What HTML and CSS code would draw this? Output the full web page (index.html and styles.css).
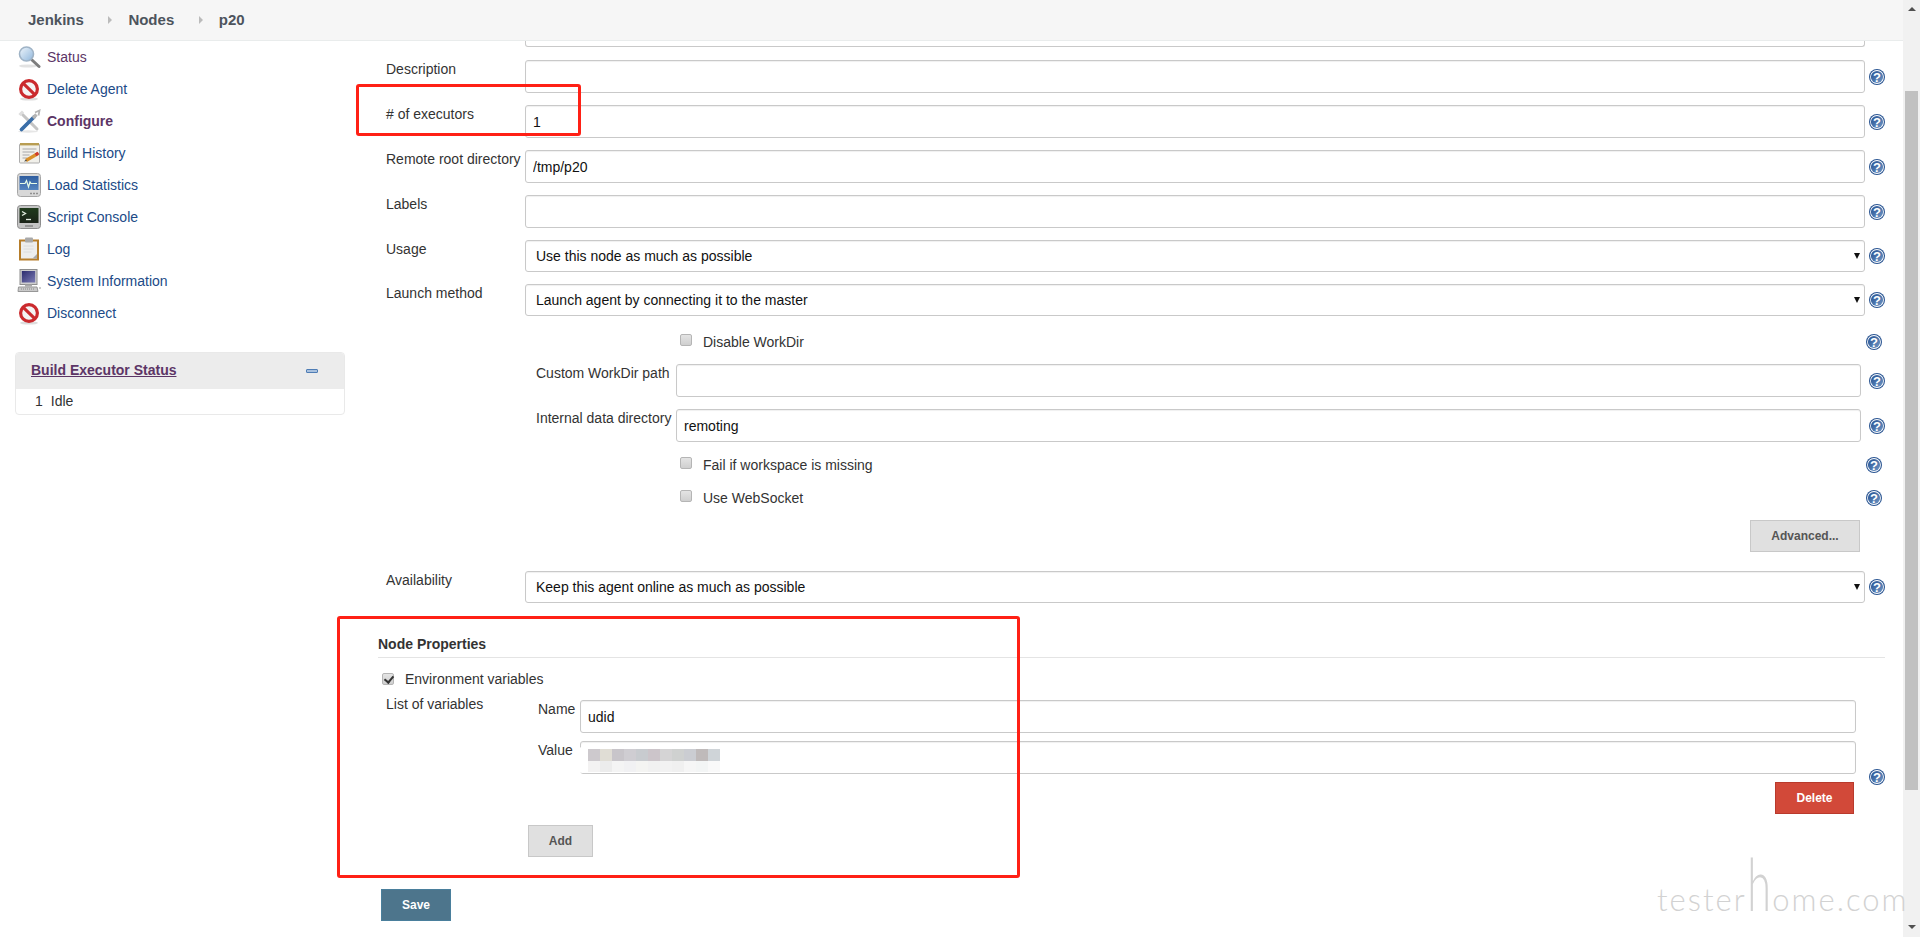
FILE: index.html
```html
<!DOCTYPE html>
<html lang="en">
<head>
<meta charset="utf-8">
<title>p20 Config [Jenkins]</title>
<link rel="stylesheet" href="styles.css">
</head>
<body>
<svg class="defs" width="0" height="0" aria-hidden="true">
  <defs>
    <linearGradient id="helpFill" x1="0" y1="0" x2="1" y2="1"><stop offset="0" stop-color="#234f90"/><stop offset="1" stop-color="#7198c6"/></linearGradient>
    <linearGradient id="glass" x1="0" y1="0" x2="1" y2="1"><stop offset="0" stop-color="#eef5fb"/><stop offset="1" stop-color="#8fb6dc"/></linearGradient>
    <linearGradient id="screen" x1="0" y1="0" x2="0" y2="1"><stop offset="0" stop-color="#2f5d9f"/><stop offset="1" stop-color="#5585bf"/></linearGradient>
    <linearGradient id="term" x1="0" y1="0" x2="0" y2="1"><stop offset="0" stop-color="#1f3a1c"/><stop offset="1" stop-color="#1b2318"/></linearGradient>
    <linearGradient id="desk" x1="0" y1="0" x2="1" y2="1"><stop offset="0" stop-color="#2c2c6e"/><stop offset="1" stop-color="#7c7cb4"/></linearGradient>
    <symbol id="help" viewBox="0 0 16 16">
      <circle cx="8" cy="8" r="8" fill="#2a5592"/>
      <circle cx="8" cy="8" r="6.9" fill="#fff"/>
      <circle cx="8" cy="8" r="6.1" fill="url(#helpFill)"/>
      <text x="8" y="12.6" text-anchor="middle" class="help-mark">?</text>
    </symbol>
    <symbol id="no" viewBox="0 0 24 24">
      <ellipse cx="12" cy="22" rx="9" ry="1.6" fill="#ddd"/>
      <circle cx="12" cy="12" r="8.4" fill="#f4f4f4" stroke="#cb2a2e" stroke-width="3.2"/>
      <path d="M6.2 6.4 L17.8 17.6" stroke="#cb2a2e" stroke-width="3.2"/>
    </symbol>
  </defs>
</svg>

<div class="page">
  <header class="topbar">
    <a class="crumb">Jenkins</a><span class="crumb-arrow"></span>
    <a class="crumb">Nodes</a><span class="crumb-arrow"></span>
    <a class="crumb">p20</a>
  </header>

  <div class="body-row">
    <aside class="sidebar">
      <nav class="tasks">
        <a class="task visited">
          <svg class="task-icon" viewBox="0 0 24 24"><ellipse cx="11" cy="21" rx="9" ry="1.6" fill="#e2e2e2"/><path d="M15 15 L22 21.5" stroke="#7d7d7d" stroke-width="3" stroke-linecap="round"/><circle cx="9.5" cy="9" r="7" fill="url(#glass)" stroke="#9fb3c6" stroke-width="1.6"/></svg>
          <span>Status</span>
        </a>
        <a class="task"><svg class="task-icon"><use href="#no"/></svg><span>Delete Agent</span></a>
        <a class="task current">
          <svg class="task-icon" viewBox="0 0 24 24"><ellipse cx="11" cy="22.500" rx="10" ry="1.200" fill="#e6e6e6"/><path d="M5.500 5.500 L20 20" stroke="#c4c4c4" stroke-width="3" stroke-linecap="round"/><path d="M2.500 6 L6 2.500" stroke="#dedede" stroke-width="3"/><path d="M17 8 L4.500 20.500" stroke="#3a6ea8" stroke-width="3.800" stroke-linecap="round"/><path d="M16 9 L19.500 5.500" stroke="#b5b5b5" stroke-width="3.400"/><path d="M18 3.500 L22.500 1.500 L21.500 6.500" fill="none" stroke="#b5b5b5" stroke-width="1.800"/></svg>
          <span>Configure</span>
        </a>
        <a class="task">
          <svg class="task-icon" viewBox="0 0 24 24"><rect x="2.500" y="3" width="20" height="19" rx="1" fill="#f1f0ea" stroke="#adadad"/><rect x="3" y="2" width="19" height="2.400" fill="#b89d52"/><path d="M5.500 8h14M5.500 11h12M5.500 14h7M5.500 17h5" stroke="#a8a8a8"/><path d="M9 19.500 L21 12.500" stroke="#d99028" stroke-width="3.200"/><path d="M18.500 13.800 L21.500 12" stroke="#cf3a2c" stroke-width="3.200"/><path d="M7 20.500 L9 18.500 L10 20z" fill="#444"/></svg>
          <span>Build History</span>
        </a>
        <a class="task">
          <svg class="task-icon" viewBox="0 0 24 24"><rect x="0.500" y="0.500" width="23" height="23" rx="3" fill="#d8d8d8" stroke="#a6a6a6"/><rect x="2.500" y="3" width="19" height="14" fill="url(#screen)"/><path d="M3 10.500h5l1.500-3 2 6.500 1.500-5 1 1.500h6" fill="none" stroke="#e6fbe6" stroke-width="1.200"/><path d="M13 20.500h8" stroke="#909090" stroke-width="1.400" stroke-dasharray="2 1"/></svg>
          <span>Load Statistics</span>
        </a>
        <a class="task">
          <svg class="task-icon" viewBox="0 0 24 24"><rect x="0.500" y="0.500" width="23" height="23" rx="3" fill="#c4c4c4" stroke="#8d8d8d"/><rect x="2.500" y="3" width="19" height="15" fill="url(#term)"/><path d="M5 6.500 L8.500 8.500 L5 10.500" fill="none" stroke="#e4eee0" stroke-width="1.300"/><path d="M9 14.500h5" stroke="#e4eee0" stroke-width="1.300"/><path d="M8 21h8" stroke="#777" stroke-width="1.200"/></svg>
          <span>Script Console</span>
        </a>
        <a class="task">
          <svg class="task-icon" viewBox="0 0 24 24"><rect x="2" y="2.500" width="20" height="21" fill="#b67d2a"/><rect x="4" y="4.500" width="16" height="17" fill="#ededed"/><path d="M15.500 21.500 L20 17 L20 21.500z" fill="#a8a8a8"/><rect x="8" y="0.500" width="8" height="5" rx="1" fill="#a9a9a9"/><path d="M6.500 9h10M6.500 12h10M6.500 15h8" stroke="#dcdcdc"/></svg>
          <span>Log</span>
        </a>
        <a class="task">
          <svg class="task-icon" viewBox="0 0 24 24"><rect x="3" y="0.500" width="17" height="15" fill="#cfcfcf" stroke="#8e8e8e"/><rect x="4.800" y="2" width="13.400" height="11.500" fill="url(#desk)"/><rect x="8" y="15.500" width="7" height="2" fill="#aaa"/><path d="M1.500 18h18.500l1 4.500H1z" fill="#c9c9c9" stroke="#979797"/><path d="M4 20h14" stroke="#8a8a8a" stroke-dasharray="1 1"/><circle cx="23" cy="19" r="1" fill="#bbb"/></svg>
          <span>System Information</span>
        </a>
        <a class="task"><svg class="task-icon"><use href="#no"/></svg><span>Disconnect</span></a>
      </nav>

      <section class="panel">
        <div class="panel-head">
          <a class="panel-title">Build Executor Status</a>
          <span class="collapse"></span>
        </div>
        <div class="panel-body"><span class="exec-num">1</span><span>Idle</span></div>
      </section>
    </aside>

    <main class="main">
      <div class="row"><span></span><input class="field partial" type="text"></div>

      <div class="row"><label class="lbl">Description</label><input class="field" type="text"><svg class="help"><use href="#help"/></svg></div>
      <div class="row"><label class="lbl"># of executors</label><input class="field" type="text" value="1"><svg class="help"><use href="#help"/></svg></div>
      <div class="row"><label class="lbl">Remote root directory</label><input class="field" type="text" value="/tmp/p20"><svg class="help"><use href="#help"/></svg></div>
      <div class="row"><label class="lbl">Labels</label><input class="field" type="text"><svg class="help"><use href="#help"/></svg></div>
      <div class="row"><label class="lbl">Usage</label><div class="select-wrap"><select class="field select"><option>Use this node as much as possible</option></select></div><svg class="help"><use href="#help"/></svg></div>
      <div class="row"><label class="lbl">Launch method</label><div class="select-wrap"><select class="field select"><option>Launch agent by connecting it to the master</option></select></div><svg class="help"><use href="#help"/></svg></div>

      <div class="sub">
        <div class="check-row"><input class="check" type="checkbox"><label>Disable WorkDir</label><svg class="help"><use href="#help"/></svg></div>
        <div class="sub-row"><label class="lbl">Custom WorkDir path</label><input class="field" type="text"><svg class="help"><use href="#help"/></svg></div>
        <div class="sub-row"><label class="lbl">Internal data directory</label><input class="field" type="text" value="remoting"><svg class="help"><use href="#help"/></svg></div>
        <div class="check-row"><input class="check" type="checkbox"><label>Fail if workspace is missing</label><svg class="help"><use href="#help"/></svg></div>
        <div class="check-row"><input class="check" type="checkbox"><label>Use WebSocket</label><svg class="help"><use href="#help"/></svg></div>
      </div>

      <div class="advanced-row"><button class="btn adv" type="button">Advanced...</button></div>

      <div class="row"><label class="lbl">Availability</label><div class="select-wrap"><select class="field select"><option>Keep this agent online as much as possible</option></select></div><svg class="help"><use href="#help"/></svg></div>

      <h2 class="section-title">Node Properties</h2>
      <div class="env-row"><input class="check" type="checkbox" checked><label>Environment variables</label></div>

      <div class="vars">
        <label class="lbl list-label">List of variables</label>
        <label class="lbl offset">Name</label>
        <input class="field offset" type="text" value="udid">
        <span></span>

        <span></span>
        <label class="lbl">Value</label>
        <div class="masked">
          <input class="field" type="text">
          <div class="blob"></div>
          <div class="pixels"><i></i><i></i><i></i><i></i><i></i><i></i><i></i><i></i><i></i><i></i><i></i><i></i><i></i><i></i><i></i><i></i><i></i><i></i><i></i><i></i><i></i><i></i></div>
        </div>
        <svg class="help help-vars"><use href="#help"/></svg>

        <span></span><span></span>
        <button class="btn danger" type="button">Delete</button>
      </div>

      <div class="add-row"><button class="btn add" type="button">Add</button></div>
      <div class="save-row"><button class="btn save" type="button">Save</button></div>
    </main>
  </div>
</div>

<div class="scrollbar">
  <span class="sb-up"></span>
  <div class="sb-thumb"></div>
  <span class="sb-down"></span>
</div>

<div class="red-box box-exec"></div>
<div class="red-box box-node"></div>
<div class="watermark">tester<span class="wm-big">h</span>ome.com</div>
</body>
</html>
```
FILE: styles.css
```css
* { box-sizing: border-box; }

html, body { margin: 0; height: 100%; }

body {
  display: flex;
  height: 937px;
  overflow: hidden;
  background: #fff;
  color: #333;
  font: 14px/18px "Liberation Sans", Arial, sans-serif;
}

.defs { position: absolute; }

.help-mark {
  fill: #fff;
  font: bold 13px "Liberation Sans", Arial, sans-serif;
}

.page {
  flex: 1;
  min-width: 0;
  display: flex;
  flex-direction: column;
}

/* top breadcrumb bar */
.topbar {
  height: 41px;
  flex: none;
  display: flex;
  align-items: center;
  padding: 0 0 1px 28px;
  background: #f6f6f6;
  border-bottom: 1px solid #e9ecec;
}

.crumb {
  color: #4d545d;
  font-size: 15px;
  font-weight: bold;
}

.crumb-arrow {
  width: 0;
  height: 0;
  margin: 0 16px 0 24.500px;
  border-left: 4px solid #bbb;
  border-top: 4px solid transparent;
  border-bottom: 4px solid transparent;
}

.body-row {
  flex: 1;
  min-height: 0;
  display: flex;
}

/* side panel */
.sidebar {
  width: 345px;
  flex: none;
  padding-left: 15px;
}

.tasks {
  display: flex;
  flex-direction: column;
  margin-left: -15px;
}

.task {
  height: 32px;
  display: flex;
  align-items: center;
  gap: 6px;
  padding-left: 17px;
  color: #204a87;
}

.task.visited { color: #5c3566; }

.task.current {
  color: #5c3566;
  font-weight: bold;
}

.task-icon {
  width: 24px;
  height: 24px;
  flex: none;
}

.panel {
  margin-top: 23px;
  border: 1px solid #e9e9e9;
  border-radius: 4px;
  overflow: hidden;
}

.panel-head {
  height: 36px;
  display: flex;
  align-items: center;
  justify-content: space-between;
  padding: 0 26px 2px 15px;
  background: #ececec;
}

.panel-title {
  color: #5c3566;
  font-weight: bold;
  text-decoration: underline;
}

.collapse {
  width: 12px;
  height: 4px;
  margin-top: 2px;
  background: #a9c1de;
  border: 1px solid #4f7db5;
  border-radius: 1px;
}

.panel-body {
  height: 25px;
  display: flex;
  align-items: center;
  padding: 0 0 2px 19px;
  gap: 8px;
}

/* form */
.main {
  flex: 1;
  min-width: 0;
  padding-left: 33px;
}

.row {
  display: grid;
  grid-template-columns: 139px 1fr 38px;
  margin-bottom: 12px;
  padding-left: 8px;
}

.row:first-child { margin-bottom: 13px; }

.lbl { color: #333; white-space: nowrap; }

.field {
  width: 100%;
  height: 33px;
  padding: 0 6px 0 7px;
  color: #111;
  background: #fff;
  border: 1px solid #c9c9c9;
  border-radius: 3px;
  box-shadow: inset 0 1px 1px #f0f0f0;
  font: 14px "Liberation Sans", Arial, sans-serif;
  outline: 0;
}

.field.partial {
  height: 6px;
  border-top: 0;
  border-radius: 0 0 3px 3px;
  box-shadow: none;
}

.select-wrap { position: relative; }

.select-wrap::after {
  content: "";
  position: absolute;
  right: 5px;
  top: 13px;
  border-top: 6px solid #111;
  border-left: 3px solid transparent;
  border-right: 3px solid transparent;
}

.select {
  display: block;
  height: 32px;
  padding-left: 10px;
  appearance: none;
}

.help {
  width: 16px;
  height: 16px;
  justify-self: end;
  align-self: center;
  margin-right: 18px;
}

.sub {
  padding: 4px 0 0 8px;
}

.sub .help { margin-right: 21px; }

.check-row {
  display: grid;
  grid-template-columns: 1fr 38px;
  align-items: center;
  position: relative;
  height: 20px;
  margin-bottom: 13px;
  padding-left: 317px;
}

.check-row:first-child { margin-bottom: 12px; }

.sub-row + .check-row { margin-top: 13px; }

.check-row:last-child { margin-bottom: 12px; }

.check-row .check { position: absolute; left: 294px; top: 2px; }

.sub-row {
  display: grid;
  grid-template-columns: 140px 1fr 42px;
  margin-bottom: 12px;
  padding-left: 150px;
}

.sub-row .help { margin-right: 18px; }

.check {
  appearance: none;
  width: 12px;
  height: 12px;
  margin: 0;
  position: relative;
  background: linear-gradient(#e4e4e4, #cfcfcf);
  border: 1px solid #b5b5b5;
  border-radius: 2px;
}

.check:checked::after {
  content: "";
  position: absolute;
  left: 3px;
  top: 0;
  width: 4px;
  height: 7px;
  border: solid #333;
  border-width: 0 2px 2px 0;
  transform: rotate(40deg);
}

.advanced-row {
  display: flex;
  justify-content: flex-end;
  padding-right: 43px;
  margin: 0 0 19px;
}

.btn {
  height: 32px;
  padding: 0;
  font: bold 12px "Liberation Sans", Arial, sans-serif;
  color: #555;
  background: #e0e0e0;
  border: 1px solid #c8c8c8;
}

.adv { width: 110px; }

.section-title {
  margin: 32px 18px 0 0;
  padding: 0 0 4px;
  height: 23px;
  line-height: 18px;
  font-size: 14px;
  font-weight: bold;
  color: #333;
  border-bottom: 1px solid #e4e4e4;
}

.env-row {
  display: flex;
  align-items: center;
  height: 24px;
  margin-top: 9px;
  padding-left: 4px;
}

.env-row label { padding-left: 11px; }

.vars {
  display: grid;
  grid-template-columns: 152px 42px 1fr 47px;
  row-gap: 8px;
  margin-top: 4px;
  padding-left: 8px;
}

.offset { margin-top: 5px; }

.masked { position: relative; }

.masked .field { display: block; }

.blob {
  position: absolute;
  left: -5px;
  top: 6px;
  width: 150px;
  height: 26px;
  background: #fff;
  border-radius: 8px;
}

.pixels {
  position: absolute;
  left: 8px;
  top: 8px;
  display: grid;
  grid-template-columns: repeat(11, 12px);
  grid-template-rows: 12px 11px;
}

.pixels i:nth-child(1) { background: #cdc9cd; }
.pixels i:nth-child(2) { background: #e0ddd5; }
.pixels i:nth-child(3) { background: #c8c5ca; }
.pixels i:nth-child(4) { background: #cfcdd2; }
.pixels i:nth-child(5) { background: #c8cbcf; }
.pixels i:nth-child(6) { background: #ccc5ca; }
.pixels i:nth-child(7) { background: #d5d4d5; }
.pixels i:nth-child(8) { background: #cfd1d0; }
.pixels i:nth-child(9) { background: #cbcdd2; }
.pixels i:nth-child(10) { background: #bfbaba; }
.pixels i:nth-child(11) { background: #cfd4d8; }
.pixels i:nth-child(12) { background: #f3f2f2; }
.pixels i:nth-child(13) { background: #ececec; }
.pixels i:nth-child(14) { background: #f4f4f4; }
.pixels i:nth-child(15) { background: #f1f1f3; }
.pixels i:nth-child(16) { background: #f4f4f2; }
.pixels i:nth-child(17) { background: #f1f1f1; }
.pixels i:nth-child(18) { background: #f2f2f2; }
.pixels i:nth-child(19) { background: #f0f0f0; }
.pixels i:nth-child(20) { background: #f6f6f6; }
.pixels i:nth-child(21) { background: #f3f5f5; }
.pixels i:nth-child(22) { background: #f9f9f9; }

.help-vars {
  grid-row: span 2;
  align-self: start;
  margin-top: 28px;
}

.danger {
  width: 79px;
  justify-self: end;
  margin-right: 2px;
  color: #fff;
  background: #d24939;
  border-color: #b93a2c;
}

.add-row {
  margin-top: 11px;
  padding-left: 150px;
}

.add { width: 65px; }

.save-row {
  margin-top: 32px;
  padding-left: 3px;
}

.save {
  width: 70px;
  color: #fff;
  background: #4d758c;
  border-color: #4a7f9c;
}

/* fake scrollbar */
.scrollbar {
  width: 17px;
  flex: none;
  display: flex;
  flex-direction: column;
  align-items: center;
  background: #f1f1f1;
}

.sb-up, .sb-down {
  width: 0;
  height: 0;
  border-left: 4px solid transparent;
  border-right: 4px solid transparent;
}

.sb-up {
  margin-top: 7px;
  border-bottom: 4px solid #505050;
}

.sb-thumb {
  width: 13px;
  height: 699px;
  margin-top: 80px;
  background: #c1c1c1;
}

.sb-down {
  margin-top: 135px;
  border-top: 4px solid #505050;
}

/* annotations drawn over the screenshot */
.red-box {
  position: absolute;
  border: 3px solid #ff2015;
  border-radius: 3px;
}

.box-exec { left: 356px; top: 84px; width: 225px; height: 52px; }
.box-node { left: 337px; top: 616px; width: 683px; height: 262px; }

.watermark {
  position: absolute;
  left: 1657px;
  top: 859px;
  color: #d2d2d2;
  font: 300 31px/48px Lato, "Open Sans", sans-serif;
  letter-spacing: 2px;
  white-space: nowrap;
  pointer-events: none;
}

.wm-big {
  display: inline-block;
  font-size: 72px;
  line-height: 48px;
  transform: scaleX(.6);
  margin: 0 -8px;
}
```
